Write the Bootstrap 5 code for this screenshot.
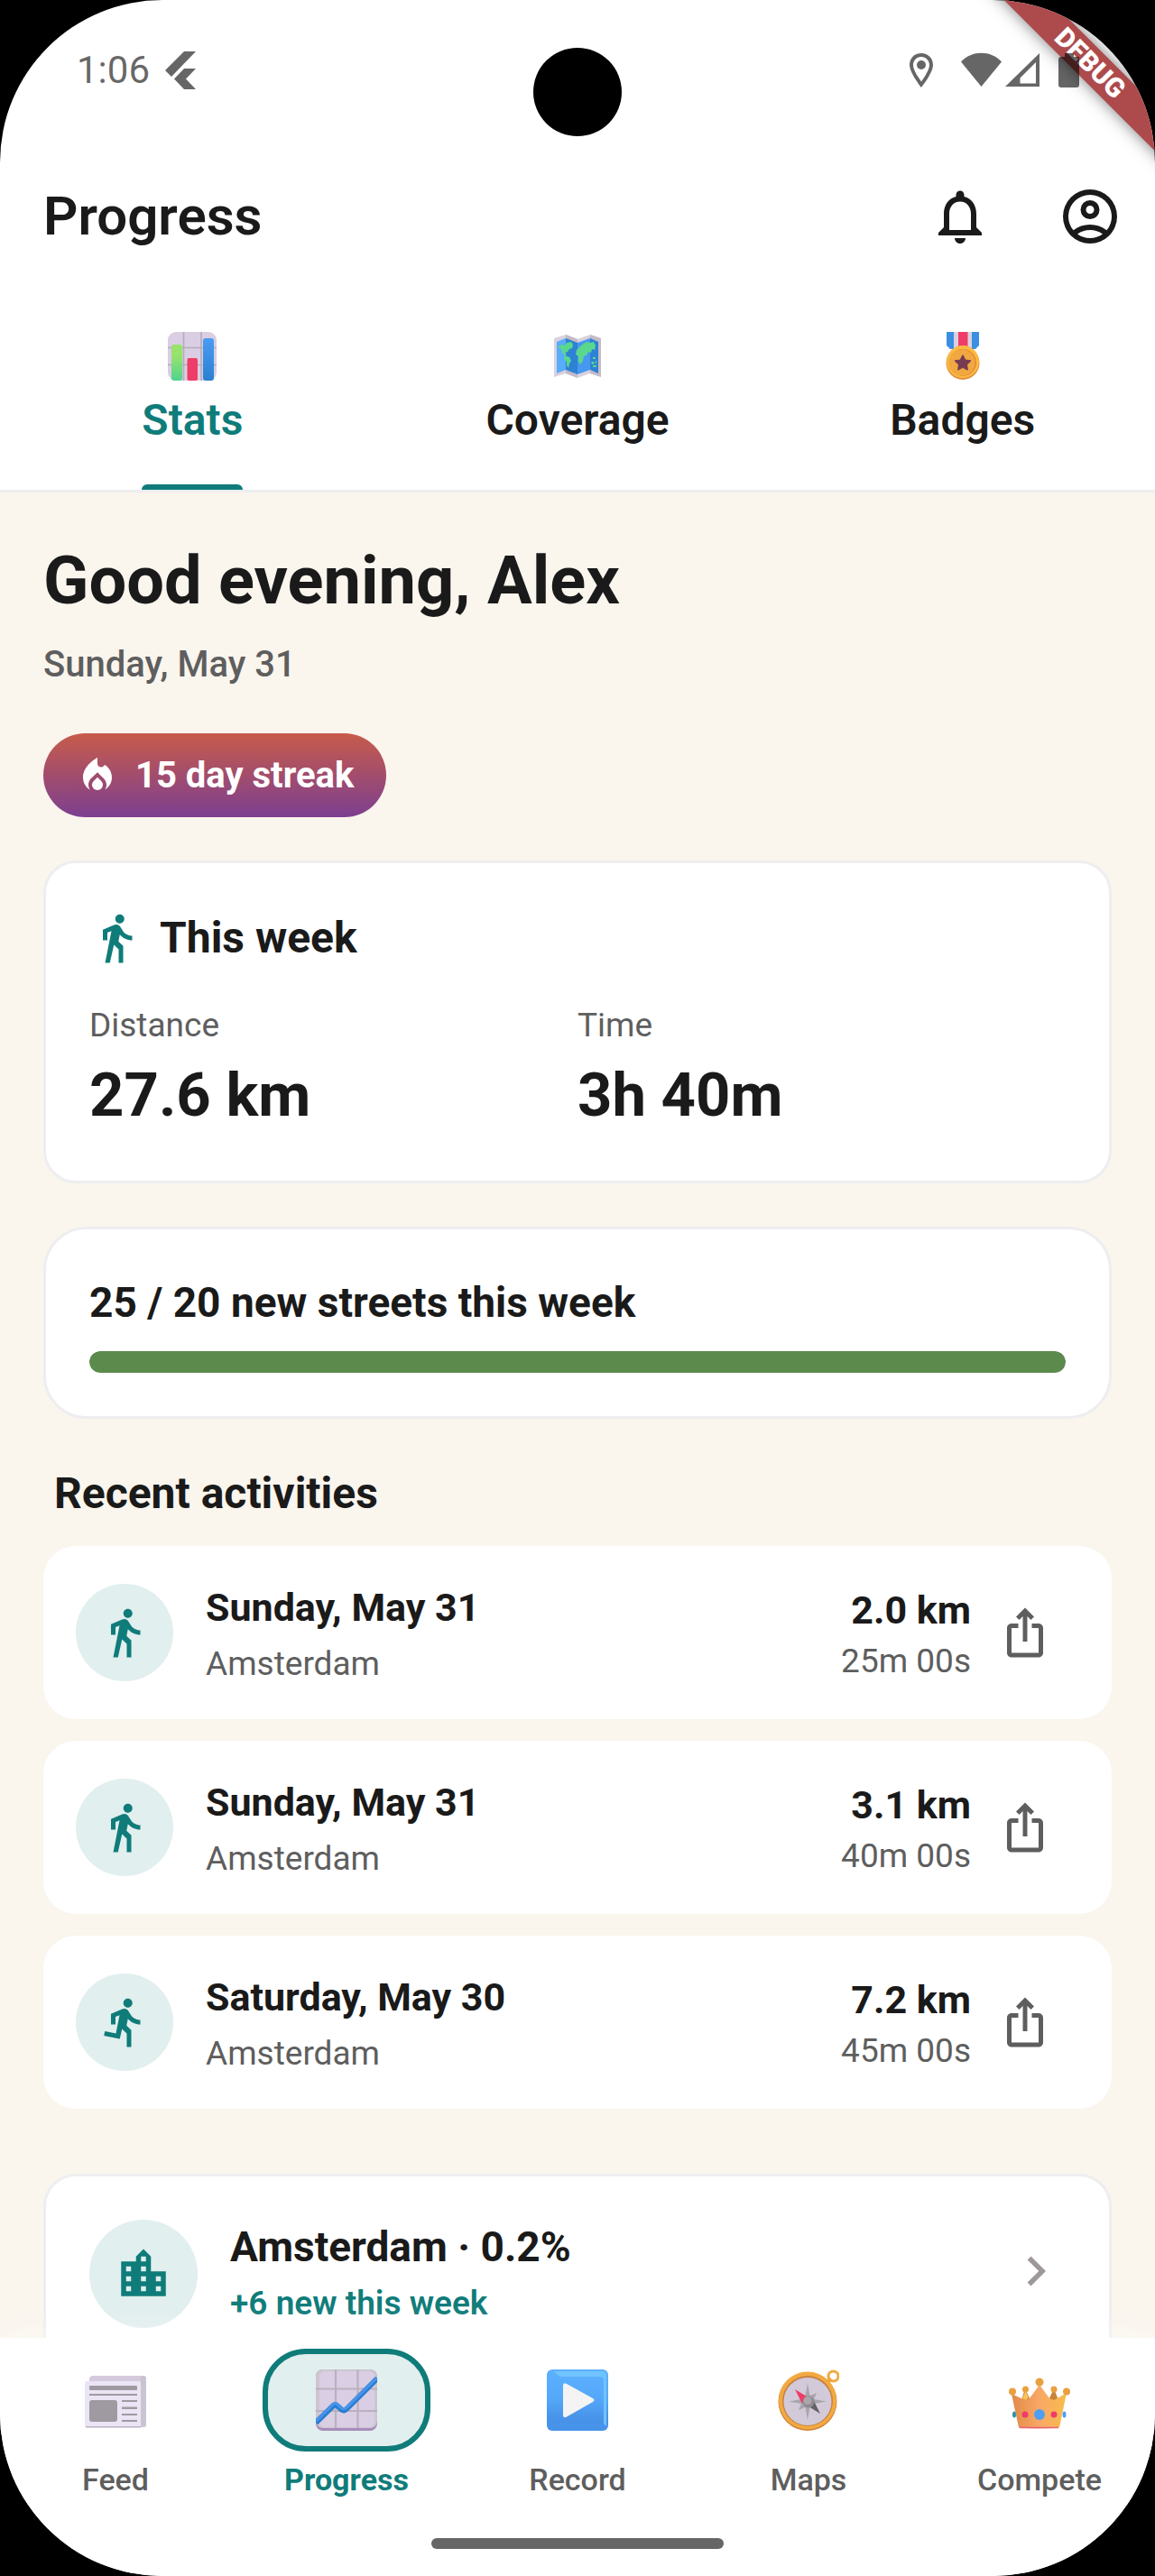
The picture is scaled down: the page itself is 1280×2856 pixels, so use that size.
<!DOCTYPE html>
<html lang="en">
<head>
<meta charset="utf-8">
<meta name="viewport" content="width=device-width, initial-scale=1">
<title>Progress</title>
<link href="https://cdn.jsdelivr.net/npm/bootstrap@5.3.0/dist/css/bootstrap.min.css" rel="stylesheet">
<style>
:root{--ink:#1a1a1a;--muted:#5e5e5e;--teal:#0f7c7a;--mint:#e1efee;--sand:#faf5ed;--line:#eeeef0}
body{background:#000;color:var(--ink);font-family:Roboto,"Liberation Sans",sans-serif}
a{color:inherit;text-decoration:none}
svg{display:block;flex:none}
.phone{background:#fff;border-radius:180px}
.status{height:156px;padding:0 84px 0 85px;color:rgba(0,0,0,.6);z-index:3}
.clock{font-size:42px;line-height:48px}
.camera{width:98px;height:98px;top:53px;left:50%;margin-left:-49px;border-radius:50%;background:#000}
.ribbon{width:400px;height:36px;top:52px;right:-128px;transform:rotate(45deg);background:#ad4b4c;box-shadow:0 0 18px rgba(0,0,0,.5);color:#fff;font-size:30px;line-height:36px;font-weight:900;z-index:2}
.topbar{height:168px;padding:0 36px 0 48px}
.topbar h1{font-size:60px;line-height:72px;font-weight:600}
.topbar .btn{color:var(--ink)}
.tabs{border-bottom:3px solid var(--line)}
.tab{padding-top:44px;font-size:48px;line-height:60px;font-weight:600}
.tab span{margin-top:14px}
.tab::after{content:"";align-self:stretch;height:6px;margin-top:41px;border-radius:6px 6px 0 0}
.tab.active{color:var(--teal)}
.tab.active::after{background:var(--teal)}
.feedarea{background:var(--sand);padding:56px 48px 0;min-height:0}
.hello{font-size:74px;line-height:84px;font-weight:700}
.today{margin-top:26px;font-size:40px;line-height:50px;font-weight:500;color:var(--muted)}
.streak{margin-top:51px;height:93px;padding:0 36px;gap:18px;border-radius:48px;background:linear-gradient(#c75b4a,#7d3f90);color:#fff;font-size:40px;font-weight:700}
.panel{margin-top:48px;padding:48px;border:3px solid var(--line);border-radius:36px;background:#fff}
.panel-wide{border-radius:48px}
.panel-head{gap:18px;margin-bottom:38px}
.h-md{font-size:48px;line-height:70px;font-weight:700}
.caption{font-size:37px;line-height:48px;color:var(--muted)}
.figure-lg{margin-top:6px;font-size:67px;line-height:94px;font-weight:700}
.goal{font-size:46px;line-height:66px;font-weight:700}
.progress{margin-top:21px;height:24px;border-radius:12px;background:#e6ece4}
.progress-bar{background:#5c8a4c;border-radius:12px}
.section-title{margin:53px 12px 28px;font-size:48px;line-height:60px;font-weight:700}
.activity{height:192px;padding:0 36px;border-radius:36px;background:#fff}
.stack{gap:24px}
.avatar{width:108px;height:108px;margin-right:36px;border-radius:50%;background:var(--mint);color:var(--teal)}
.avatar-lg{width:120px;height:120px}
.t-lg{font-size:43px;line-height:60px;font-weight:700}
.t-xl{font-size:46px;line-height:60px;font-weight:700}
.gap-a{gap:9px}.gap-b{gap:3px}
.share{width:120px;height:120px;color:var(--muted)}
.city{margin-top:72px;min-height:300px}
.teal{color:var(--teal)}
.dock{background:#fff;padding:12px 0 30px;box-shadow:0 -6px 30px rgba(255,255,255,.5);z-index:1}
.dock-item{gap:10px;font-size:34px;line-height:42px;font-weight:500;color:var(--muted);flex:1 1 0}
.dock-ico{width:186px;height:114px;border-radius:48px;border:6px solid transparent}
.dock-item.active{color:var(--teal);font-weight:700}
.dock-item.active .dock-ico{background:var(--mint);border-color:var(--teal)}
.homebar{width:324px;height:12px;margin-top:44px;border-radius:6px;background:#666}
</style>
</head>
<body>
<svg width="0" height="0" class="position-absolute" aria-hidden="true">
  <symbol id="walk" viewBox="0 0 24 24"><path fill="currentColor" d="M13.5 5.5c1.1 0 2-.9 2-2s-.9-2-2-2-2 .9-2 2 .9 2 2 2zM9.8 8.9L7 23h2.1l1.8-8 2.1 2v6h2v-7.5l-2.1-2 .6-3C14.8 12 16.8 13 19 13v-2c-1.9 0-3.5-1-4.3-2.4l-1-1.6c-.4-.6-1-1-1.7-1-.3 0-.5.1-.8.1L6 8.3V13h2V9.6l1.8-.7"/></symbol>
  <symbol id="run" viewBox="0 0 24 24"><path fill="currentColor" d="M13.49 5.48c1.1 0 2-.9 2-2s-.9-2-2-2-2 .9-2 2 .9 2 2 2zm-3.6 13.9l1-4.4 2.1 2v6h2v-7.5l-2.1-2 .6-3c1.3 1.5 3.3 2.5 5.5 2.5v-2c-1.9 0-3.5-1-4.3-2.4l-1-1.6c-.4-.6-1-1-1.7-1-.3 0-.5.1-.8.1l-5.2 2.2v4.7h2v-3.4l1.8-.7-1.6 8.1-4.9-1-.4 2 7 1.4z"/></symbol>
  <symbol id="share" viewBox="0 0 24 24"><path fill="currentColor" d="M16 5l-1.42 1.42-1.59-1.59V16h-1.98V4.83L9.42 6.42 8 5l4-4 4 4zm4 5v11c0 1.1-.9 2-2 2H6c-1.11 0-2-.9-2-2V10c0-1.11.89-2 2-2h3v2H6v11h12V10h-3V8h3c1.1 0 2 .89 2 2z"/></symbol>
</svg>

<div class="phone vh-100 d-flex flex-column overflow-hidden position-relative">
  <div class="camera position-absolute"></div>
  <div class="ribbon position-absolute text-center">DEBUG</div>

  <div class="status flex-shrink-0 d-flex align-items-center justify-content-between position-relative">
    <div class="d-flex align-items-center gap-3">
      <span class="clock">1:06</span>
      <svg width="36" height="42" viewBox="0 0 36 42" fill="currentColor"><path d="M22 0h13L8 28l-7-7zM22 19h13L24 30.500l11 11.500H22L11 30.500z"/></svg>
    </div>
    <svg width="189" height="40" viewBox="0 0 189 40" fill="currentColor" role="img" aria-label="Location, Wi-Fi, signal, battery">
      <path fill-rule="evenodd" d="M14 1C6.500 1 1 6.500 1 14c0 9 13 25 13 25s13-16 13-25C27 6.500 21.500 1 14 1zm0 4c5 0 9 4 9 9 0 5-5 13-9 18.500C10 27 5 19 5 14c0-5 4-9 9-9z"/><circle cx="14" cy="14" r="5"/>
      <path d="M58 10.500C70 -2.500 91 -2.500 103 10.500L80.500 38z"/>
      <path fill-rule="evenodd" d="M145 1v37h-38zm-4 10-17.500 17.500V34.500H141z"/>
      <path d="M173 1h10v4h6v31a3 3 0 0 1-3 3h-17a3 3 0 0 1-3-3V8a3 3 0 0 1 3-3h4z"/>
    </svg>
  </div>

  <header class="topbar flex-shrink-0 d-flex align-items-center justify-content-between">
    <h1 class="m-0">Progress</h1>
    <div class="d-flex gap-5">
      <button class="btn border-0 p-0 me-4" aria-label="Notifications"><svg width="72" height="72" viewBox="0 0 24 24"><path fill="currentColor" d="M12 22c1.100 0 2-.9 2-2h-4c0 1.100.9 2 2 2zm6-6v-5c0-3.070-1.640-5.640-4.500-6.320V4c0-.830-.670-1.500-1.500-1.500s-1.500.670-1.500 1.500v.680C7.630 5.360 6 7.920 6 11v5l-2 2v1h16v-1l-2-2zm-2 1H8v-6c0-2.480 1.510-4.500 4-4.500s4 2.020 4 4.500v6z"/></svg></button>
      <button class="btn border-0 p-0" aria-label="Account"><svg width="72" height="72" viewBox="0 0 24 24"><path fill="currentColor" fill-rule="evenodd" d="M12 2a10 10 0 1 0 0 20 10 10 0 0 0 0-20zM7.350 18.500C8.660 17.560 10.260 17 12 17s3.340.560 4.650 1.500C15.340 19.440 13.740 20 12 20s-3.340-.560-4.650-1.500zm10.790-1.380a9.950 9.950 0 0 0-12.280 0A8 8 0 1 1 18.140 17.120zM12 6a3.500 3.500 0 1 0 0 7 3.500 3.500 0 0 0 0-7zm0 5a1.500 1.500 0 1 1 0-3 1.500 1.500 0 0 1 0 3z"/></svg></button>
    </div>
  </header>

  <nav class="tabs flex-shrink-0 d-flex" aria-label="Sections">
    <div class="col d-flex justify-content-center"><a href="#stats" class="tab active d-flex flex-column align-items-center">
      <svg width="54" height="54" viewBox="0 0 54 54"><defs><linearGradient id="gg" x2="0" y2="1"><stop offset=".3" stop-color="#98e36c"/><stop offset="1" stop-color="#4fd38f"/></linearGradient><linearGradient id="gb" x2="0" y2="1"><stop stop-color="#4a9cf2"/><stop offset="1" stop-color="#2b7fd0"/></linearGradient></defs><rect width="54" height="54" rx="9" fill="#d9cee3"/><path d="M17.500 0v54M37 0v54M0 17.500h54M0 36.500h54" stroke="#b5adba" stroke-width="1.600"/><rect x="4" y="14" width="12" height="40" rx="3" fill="url(#gg)"/><rect x="21.500" y="29" width="11.500" height="25" rx="2" fill="#ef3c68"/><rect x="39" y="7" width="12" height="47" rx="3" fill="url(#gb)"/></svg>
      <span>Stats</span></a></div>
    <div class="col d-flex justify-content-center"><a href="#coverage" class="tab d-flex flex-column align-items-center">
      <svg width="54" height="54" viewBox="0 0 54 54"><path fill="#d9d1df" d="M1 7l13-4 13 5 14-5 12 4v43l-12-4-14 5-13-5-13 4z"/><path fill="#c3bbc8" d="M14 3l13 5v43l-13-5zM41 3l12 4v43l-12-4z"/><path fill="#58acf8" d="M4 11l10-4v35L4 46z"/><path fill="#2d82d3" d="M14 7l13 5v35l-13-5z"/><path fill="#4798ee" d="M27 12l14-5v35l-14 5z"/><path fill="#2d82d3" d="M41 7l9 4v35l-9-4z"/><g fill="#59d78e"><path d="M5 17l4-3 4 1 2-3 5-1 2 3-1 4-3 1-2 3-3 1 2 2-2 1-3-3-1-4z"/><path d="M13 26l5 2 2 4-2 3-1 5-2-3v-4l-3-3z"/><path d="M26 20l5-5 6-4 4 1 4-1 2 4-1 5-3-1-1 4-3-1-2 4-3 1-1 5-3 4-2-3v-6l-3-2z"/><path d="M42 33h3l1 2-3 1zM47 32h1v3h-1zM44 37h4v2h-4zM44 28h3v2h-3z"/></g></svg>
      <span>Coverage</span></a></div>
    <div class="col d-flex justify-content-center"><a href="#badges" class="tab d-flex flex-column align-items-center">
      <svg width="54" height="54" viewBox="0 0 54 54"><path fill="#3b8ee2" d="M9 0h36v15l-4 4H13l-4-4z"/><path fill="#d9d1df" d="M17 0h20v20H17z"/><path fill="#ef3c68" d="M22 0h10.500v20H22z"/><circle cx="27" cy="34.500" r="18.500" fill="#e58b3c"/><circle cx="27" cy="33" r="18" fill="#fbb942"/><circle cx="27" cy="34" r="15" fill="#e08b35"/><circle cx="26" cy="34" r="14.500" fill="#f1a840"/><path fill="#783c52" stroke="#783c52" stroke-width="1.500" stroke-linejoin="round" d="M27 26l2.600 5.200 5.900.8-4.300 4.100 1 5.700-5.200-2.700-5.200 2.700 1-5.700-4.300-4.100 5.900-.8z"/></svg>
      <span>Badges</span></a></div>
  </nav>

  <main class="feedarea flex-grow-1 overflow-hidden">
    <h2 class="hello mb-0">Good evening, Alex</h2>
    <div class="today">Sunday, May 31</div>
    <div class="d-flex"><div class="streak d-flex align-items-center">
      <svg width="48" height="48" viewBox="0 0 24 24" fill="#fff"><path d="M12 12.900l-2.130 2.090c-.560.560-.870 1.290-.870 2.070C9 18.680 10.350 20 12 20s3-1.320 3-2.940c0-.780-.310-1.520-.870-2.070L12 12.900z"/><path d="M16 6l-.440.550C14.380 8.020 12 7.190 12 5.300V2S4 6 4 13c0 2.920 1.560 5.470 3.890 6.860-.560-.790-.890-1.760-.890-2.800 0-1.320.520-2.560 1.470-3.500L12 10.100l3.530 3.470c.950.930 1.470 2.170 1.470 3.500 0 1.020-.310 1.960-.850 2.750 1.890-1.150 3.290-3.060 3.710-5.300.660-3.550-1.070-6.900-3.860-8.520z"/></svg>
      <span>15 day streak</span></div></div>

    <section class="panel">
      <div class="panel-head d-flex align-items-center">
        <svg class="teal" width="60" height="60"><use href="#walk"/></svg>
        <h3 class="h-md mb-0">This week</h3>
      </div>
      <div class="row g-0">
        <div class="col-6"><div class="caption">Distance</div><div class="figure-lg">27.6 km</div></div>
        <div class="col-6"><div class="caption">Time</div><div class="figure-lg">3h 40m</div></div>
      </div>
    </section>

    <section class="panel panel-wide">
      <div class="goal">25 / 20 new streets this week</div>
      <div class="progress" role="progressbar" aria-label="New streets this week" aria-valuenow="100" aria-valuemin="0" aria-valuemax="100"><div class="progress-bar" style="width:100%"></div></div>
    </section>

    <h3 class="section-title">Recent activities</h3>
    <div class="stack d-flex flex-column">
      <article class="activity d-flex align-items-center">
        <div class="avatar d-flex align-items-center justify-content-center"><svg width="60" height="60"><use href="#walk"/></svg></div>
        <div class="d-flex flex-column gap-a flex-grow-1"><div class="t-lg">Sunday, May 31</div><div class="caption">Amsterdam</div></div>
        <div class="d-flex flex-column gap-b text-end"><div class="t-lg">2.0 km</div><div class="caption">25m 00s</div></div>
        <button class="share btn border-0 p-0 d-flex align-items-center justify-content-center" aria-label="Share"><svg width="60" height="60"><use href="#share"/></svg></button>
      </article>
      <article class="activity d-flex align-items-center">
        <div class="avatar d-flex align-items-center justify-content-center"><svg width="60" height="60"><use href="#walk"/></svg></div>
        <div class="d-flex flex-column gap-a flex-grow-1"><div class="t-lg">Sunday, May 31</div><div class="caption">Amsterdam</div></div>
        <div class="d-flex flex-column gap-b text-end"><div class="t-lg">3.1 km</div><div class="caption">40m 00s</div></div>
        <button class="share btn border-0 p-0 d-flex align-items-center justify-content-center" aria-label="Share"><svg width="60" height="60"><use href="#share"/></svg></button>
      </article>
      <article class="activity d-flex align-items-center">
        <div class="avatar d-flex align-items-center justify-content-center"><svg width="60" height="60"><use href="#run"/></svg></div>
        <div class="d-flex flex-column gap-a flex-grow-1"><div class="t-lg">Saturday, May 30</div><div class="caption">Amsterdam</div></div>
        <div class="d-flex flex-column gap-b text-end"><div class="t-lg">7.2 km</div><div class="caption">45m 00s</div></div>
        <button class="share btn border-0 p-0 d-flex align-items-center justify-content-center" aria-label="Share"><svg width="60" height="60"><use href="#share"/></svg></button>
      </article>
    </div>

    <a href="#amsterdam" class="panel city d-flex align-items-start">
      <div class="avatar avatar-lg d-flex align-items-center justify-content-center"><svg width="66" height="66" viewBox="0 0 24 24"><path fill="currentColor" d="M15 11V5l-3-3-3 3v2H3v14h18V11h-6zm-8 8H5v-2h2v2zm0-4H5v-2h2v2zm0-4H5V9h2v2zm6 8h-2v-2h2v2zm0-4h-2v-2h2v2zm0-4h-2V9h2v2zm0-4h-2V5h2v2zm6 12h-2v-2h2v2zm0-4h-2v-2h2v2z"/></svg></div>
      <div class="d-flex flex-column gap-a flex-grow-1"><div class="t-xl">Amsterdam · 0.2%</div><div class="caption teal fw-semibold">+6 new this week</div></div>
      <svg class="my-4" width="66" height="66" viewBox="0 0 24 24"><path fill="#9e989d" d="M10 6L8.590 7.410 13.170 12l-4.580 4.590L10 18l6-6z"/></svg>
    </a>
  </main>

  <footer class="dock flex-shrink-0 d-flex flex-column align-items-center">
    <nav class="d-flex w-100" aria-label="Main">
      <a href="#feed" class="dock-item d-flex flex-column align-items-center"><span class="dock-ico d-flex align-items-center justify-content-center">
        <svg width="68" height="68" viewBox="0 0 68 68"><rect x="5" y="7" width="63" height="57" rx="4" fill="#d5cadd"/><path fill="#cac4d0" d="M62 7h3q3 0 3 3v51q0 3-3 3h-3z"/><path fill="#bcb1c6" d="M0 60h62v4.500H1z"/><path fill="#ebe4f5" d="M0 15q0-2 2-2h58q2 0 2 2v48H0z"/><g fill="#9f99a1"><rect x="5" y="18" width="53" height="5" rx="1"/><rect x="5" y="27" width="53" height="2"/><rect x="5" y="34" width="31" height="24" rx="3"/><path d="M41 34h17v2H41zM41 41.500h17v2.500H41zM41 49h17v2H41zM41 56h17v2H41z"/></g></svg>
      </span>Feed</a>
      <a href="#progress" class="dock-item active d-flex flex-column align-items-center" aria-current="page"><span class="dock-ico d-flex align-items-center justify-content-center">
        <svg width="68" height="68" viewBox="0 0 68 68"><rect width="68" height="68" rx="8" fill="#a98dbd"/><rect width="68" height="65" rx="8" fill="#cdc6cf"/><rect x="4" y="2" width="61" height="62" rx="6" fill="#d9cee3"/><path d="M22 0v65M46.500 0v65M0 21.500h68M0 46h68" stroke="#b9b1be" stroke-width="2.200"/><path d="M0 59l19.500-19q2-2 4 0l5 4.500q3 2 6-1L68 10" fill="none" stroke="#2a7dd0" stroke-width="6"/><path d="M0 57.500l19.500-19q2-2 4 0l5 4.500q3 2 6-1L68 9" fill="none" stroke="#4795ec" stroke-width="3"/></svg>
      </span>Progress</a>
      <a href="#record" class="dock-item d-flex flex-column align-items-center"><span class="dock-ico d-flex align-items-center justify-content-center">
        <svg width="68" height="68" viewBox="0 0 68 68"><defs><linearGradient id="rb" x2="0" y2="1"><stop stop-color="#5cb0ff"/><stop offset=".45" stop-color="#56a9fa"/><stop offset=".8" stop-color="#4793e9"/></linearGradient></defs><rect width="68" height="68" rx="6" fill="url(#rb)"/><path fill="#70c3ff" d="M8 2h53q5 0 5 5v56l-3-3V12q0-4-4-4H14z"/><path fill="#f4f4f4" d="M18 18q0-4 4-2l29 16q3 2 0 4L22 52.500q-4 2-4-2z"/></svg>
      </span>Record</a>
      <a href="#maps" class="dock-item d-flex flex-column align-items-center"><span class="dock-ico d-flex align-items-center justify-content-center">
        <svg width="68" height="68" viewBox="0 0 68 68"><circle cx="61.500" cy="7.500" r="5.500" fill="none" stroke="#efaa42" stroke-width="3"/><path d="M54 15l5-5" stroke="#f0a63c" stroke-width="5"/><circle cx="33" cy="35.500" r="32.500" fill="#cf8038"/><circle cx="33" cy="34.500" r="32" fill="#f2aa40"/><circle cx="33" cy="35" r="28" fill="#c88344"/><circle cx="33" cy="35.500" r="26.500" fill="#d2cad9"/><path fill="#a9a5ac" d="M33 15l2.500 14L43 26l-3 7 14 2.500-14 2.500 3 7-7.500-3L33 56l-2.500-14L23 45l3-7-14-2.500L26 33l-3-7 7.500 3z"/><path fill="#ef3c68" d="M19 22l13 8-5 8z"/><path fill="#646066" d="M47 49L34 41l6-6z"/><circle cx="34" cy="36" r="6.500" fill="#8f8b92"/><circle cx="33" cy="34.500" r="4.500" fill="#aaa6ac"/></svg>
      </span>Maps</a>
      <a href="#compete" class="dock-item d-flex flex-column align-items-center"><span class="dock-ico d-flex align-items-center justify-content-center">
        <svg width="68" height="68" viewBox="0 0 68 68"><defs><linearGradient id="cr"><stop stop-color="#e08a48"/><stop offset=".5" stop-color="#f9a766"/><stop offset="1" stop-color="#f7bd4a"/></linearGradient></defs><path fill="#c98439" d="M14 34l4-13 6 13zM44 34l6-13 5 13z"/><path fill="url(#cr)" d="M3 27l15 7 5-2 11-15 11 15 5 2 14-8-8 38.500q-22 2-45 0z"/><path d="M12 64.500h43" stroke="#e8607a" stroke-width="1.500"/><g fill="#e9a03f"><circle cx="4" cy="24.500" r="4"/><circle cx="18.500" cy="22" r="3.500"/><circle cx="34" cy="14" r="4.500"/><circle cx="50" cy="22" r="3.500"/><circle cx="64" cy="24.500" r="4"/></g><path fill="#fac25a" d="M15 32l3.500-8 3.500 7-3.500 3z"/><ellipse cx="34" cy="50" rx="6" ry="6" fill="#4e9ff3"/><circle cx="18" cy="50" r="3.500" fill="#ef3c68"/><circle cx="50" cy="50" r="3.500" fill="#ef3c68"/><ellipse cx="6" cy="50" rx="2" ry="3.500" fill="#2d92a8"/><ellipse cx="61.500" cy="50" rx="2" ry="3.500" fill="#4e9ff3"/></svg>
      </span>Compete</a>
    </nav>
    <div class="homebar"></div>
  </footer>
</div>
<script src="https://cdn.jsdelivr.net/npm/bootstrap@5.3.0/dist/js/bootstrap.bundle.min.js"></script>
</body>
</html>
